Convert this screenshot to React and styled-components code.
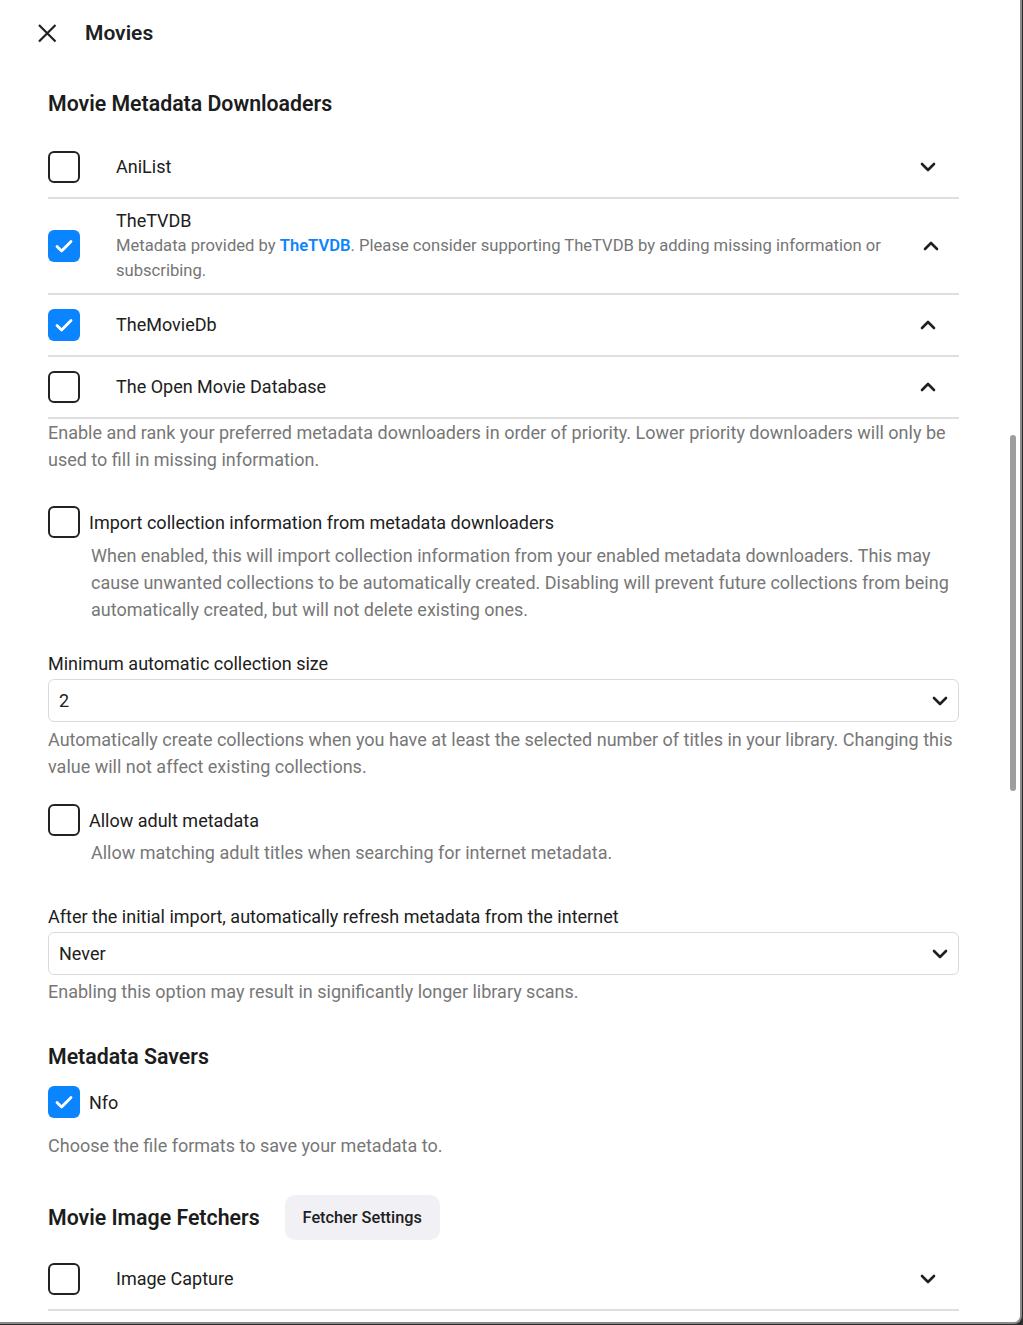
import React from 'react'
import styled, { createGlobalStyle } from 'styled-components'

const GlobalStyle = createGlobalStyle`
	html, body {
		margin: 0;
		padding: 0;
		background: #2b2b2b;
	}
	body {
		font-family: Roboto, 'Noto Sans', 'Liberation Sans', sans-serif;
		color: #202020;
		-webkit-font-smoothing: antialiased;
	}
`

const Dialog = styled.div`
	position: relative;
	box-sizing: border-box;
	width: 1022px;
	height: 1324px;
	background: #fff;
	border-right: 2px solid #8a8a8a;
	border-bottom: 2px solid #8a8a8a;
	border-bottom-right-radius: 8px;
	overflow: hidden;
`

const ScrollThumb = styled.div`
	position: absolute;
	top: 435px;
	right: 4px;
	width: 6px;
	height: 356px;
	border-radius: 3px;
	background: #9e9e9e;
`

const Header = styled.header`
	display: flex;
	align-items: center;
	height: 66px;
	padding-left: 32px;
`

const CloseButton = styled.button`
	display: flex;
	align-items: center;
	justify-content: center;
	width: 30px;
	height: 30px;
	padding: 0;
	margin-right: 23px;
	border: 0;
	background: none;
	color: #202020;
	cursor: pointer;
`

const Title = styled.h1`
	margin: 0;
	font-size: 21px;
	font-weight: 600;
	line-height: 28px;
`

const Content = styled.main`
	padding: 0 61px 0 48px;
`

const Heading = styled.h2`
	margin: ${p => p.$top || 0}px 0 0;
	font-size: 21.3px;
	font-weight: 600;
	line-height: 28px;
	color: #1c1c1c;
`

const ProviderList = styled.div`
	margin-top: ${p => p.$top || 0}px;
	display: flex;
	flex-direction: column;
`

const ProviderRow = styled.div`
	box-sizing: border-box;
	display: flex;
	align-items: center;
	min-height: 62px;
	padding: ${p => (p.$tall ? '10px' : '0')} 0;
	border-bottom: 2px solid #dedede;
`

const ProviderText = styled.div`
	flex: 1;
	margin-left: 36px;
	padding-right: 24px;
`

const ProviderName = styled.div`
	font-size: 18px;
	line-height: 24px;
	color: #202020;
`

const ProviderDesc = styled.div`
	font-size: 16.6px;
	line-height: 25px;
	color: #757575;

	a {
		color: #0b84ff;
		font-weight: 600;
		text-decoration: none;
	}
`

const Chevron = styled.span`
	display: flex;
	align-items: center;
	justify-content: center;
	width: 40px;
	margin-right: ${p => p.$shift || 11}px;
	color: #202020;
`

const Box = styled.span`
	box-sizing: border-box;
	flex: none;
	display: flex;
	align-items: center;
	justify-content: center;
	width: 32px;
	height: 32px;
	border-radius: 6px;
	border: ${p => (p.$checked ? '0' : '2px solid #222')};
	background: ${p => (p.$checked ? '#0b84ff' : '#fff')};
`

const Help = styled.div`
	margin-top: ${p => p.$top || 0}px;
	margin-left: ${p => p.$indent || 0}px;
	font-size: 18px;
	line-height: 27px;
	color: #777;
`

const CheckField = styled.label`
	display: flex;
	align-items: center;
	gap: 9px;
	margin-top: ${p => p.$top || 0}px;
	font-size: 18px;
	color: #202020;
`

const FieldLabel = styled.div`
	margin-top: ${p => p.$top || 0}px;
	font-size: 18px;
	line-height: 24px;
	color: #202020;
`

const Select = styled.div`
	box-sizing: border-box;
	display: flex;
	align-items: center;
	justify-content: space-between;
	height: 43px;
	margin-top: 3px;
	padding: 0 10px 0 10px;
	border: 1px solid #dadada;
	border-radius: 6px;
	font-size: 18px;
	color: #202020;
`

const HeadingRow = styled.div`
	display: flex;
	align-items: center;
	gap: 25px;
	margin-top: ${p => p.$top || 0}px;

	${Heading} {
		margin: 0;
	}
`

const GhostButton = styled.button`
	height: 45px;
	padding: 0 18px;
	border: 0;
	border-radius: 10px;
	background: #f1f1f5;
	font-family: inherit;
	font-size: 16.3px;
	font-weight: 500;
	color: #202020;
`

const Check = () => (
	<svg width="24" height="24" viewBox="0 0 24 24" fill="none">
		<path d="M5 12.5l4.6 4.6L19 7.6" stroke="#fff" strokeWidth="2.8" strokeLinecap="round" strokeLinejoin="round" />
	</svg>
)

const Checkbox = ({ checked }) => <Box $checked={checked}>{checked && <Check />}</Box>

const ChevronIcon = ({ up }) => (
	<svg width="16" height="10" viewBox="0 0 16 10" fill="none">
		<path
			d={up ? 'M2 8l6-6 6 6' : 'M2 2l6 6 6-6'}
			stroke="currentColor"
			strokeWidth="2.6"
			strokeLinecap="round"
			strokeLinejoin="round"
		/>
	</svg>
)

const CloseIcon = () => (
	<svg width="20" height="20" viewBox="0 0 20 20" fill="none">
		<path d="M2 2l16.5 16.5M18.5 2L2 18.5" stroke="currentColor" strokeWidth="2.2" />
	</svg>
)

const Provider = ({ name, checked, up, desc, shift }) => (
	<ProviderRow $tall={!!desc}>
		<Checkbox checked={checked} />
		<ProviderText>
			<ProviderName>{name}</ProviderName>
			{desc && <ProviderDesc>{desc}</ProviderDesc>}
		</ProviderText>
		<Chevron $shift={shift}>
			<ChevronIcon up={up} />
		</Chevron>
	</ProviderRow>
)

export default function App() {
	return (
		<>
			<GlobalStyle />
			<Dialog>
				<Header>
					<CloseButton aria-label="Close">
						<CloseIcon />
					</CloseButton>
					<Title>Movies</Title>
				</Header>

				<Content>
					<Heading $top={24}>Movie Metadata Downloaders</Heading>
					<ProviderList $top={19}>
						<Provider name="AniList" />
						<Provider
							name="TheTVDB"
							checked
							up
							shift={8}
							desc={
								<>
									Metadata provided by <a href="#tvdb">TheTVDB</a>. Please consider supporting TheTVDB by adding
									missing information or subscribing.
								</>
							}
						/>
						<Provider name="TheMovieDb" checked up />
						<Provider name="The Open Movie Database" up />
					</ProviderList>
					<Help>
						Enable and rank your preferred metadata downloaders in order of priority. Lower priority downloaders
						will only be used to fill in missing information.
					</Help>

					<CheckField $top={33}>
						<Checkbox />
						Import collection information from metadata downloaders
					</CheckField>
					<Help $top={4} $indent={43}>
						When enabled, this will import collection information from your enabled metadata downloaders. This may
						cause unwanted collections to be automatically created. Disabling will prevent future collections from
						being automatically created, but will not delete existing ones.
					</Help>

					<FieldLabel $top={29}>Minimum automatic collection size</FieldLabel>
					<Select>
						2
						<ChevronIcon />
					</Select>
					<Help $top={4}>
						Automatically create collections when you have at least the selected number of titles in your library.
						Changing this value will not affect existing collections.
					</Help>

					<CheckField $top={24}>
						<Checkbox />
						Allow adult metadata
					</CheckField>
					<Help $top={3} $indent={43}>
						Allow matching adult titles when searching for internet metadata.
					</Help>

					<FieldLabel $top={39}>After the initial import, automatically refresh metadata from the internet</FieldLabel>
					<Select>
						Never
						<ChevronIcon />
					</Select>
					<Help $top={3}>Enabling this option may result in significantly longer library scans.</Help>

					<Heading $top={38}>Metadata Savers</Heading>
					<CheckField $top={15}>
						<Checkbox checked />
						Nfo
					</CheckField>
					<Help $top={14}>Choose the file formats to save your metadata to.</Help>

					<HeadingRow $top={36}>
						<Heading>Movie Image Fetchers</Heading>
						<GhostButton>Fetcher Settings</GhostButton>
					</HeadingRow>
					<ProviderList $top={9}>
						<Provider name="Image Capture" />
					</ProviderList>
				</Content>
				<ScrollThumb />
			</Dialog>
		</>
	)
}
